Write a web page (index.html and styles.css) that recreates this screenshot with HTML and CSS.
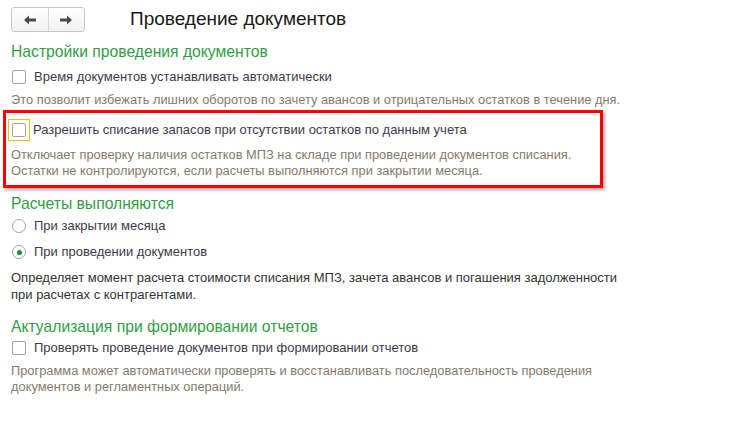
FILE: index.html
```html
<!DOCTYPE html>
<html lang="ru">
<head>
<meta charset="utf-8">
<title>Проведение документов</title>
<link rel="stylesheet" href="styles.css">
</head>
<body>
<div class="header">
  <div class="nav">
    <button class="nav-btn" aria-label="Назад">
      <svg width="14" height="10" viewBox="0 0 14 10"><path d="M1 5 L6 0.5 L6 3.5 L13 3.5 L13 6.5 L6 6.5 L6 9.5 Z" fill="#4a4a4a"/></svg>
    </button>
    <button class="nav-btn" aria-label="Вперед">
      <svg width="14" height="10" viewBox="0 0 14 10"><path d="M13 5 L8 0.5 L8 3.5 L1 3.5 L1 6.5 L8 6.5 L8 9.5 Z" fill="#4a4a4a"/></svg>
    </button>
  </div>
  <h1 class="title">Проведение документов</h1>
</div>

<div class="content">
  <div class="group-title g1">Настройки проведения документов</div>
  <label class="row r1"><span class="cb"></span>Время документов устанавливать автоматически</label>
  <div class="note n1">Это позволит избежать лишних оборотов по зачету авансов и отрицательных остатков в течение дня.</div>

  <div class="highlight">
    <label class="row r2"><span class="cb-focus"><span class="cb"></span></span>Разрешить списание запасов при отсутствии остатков по данным учета</label>
    <div class="note n2">Отключает проверку наличия остатков МПЗ на складе при проведении документов списания.<br>Остатки не контролируются, если расчеты выполняются при закрытии месяца.</div>
  </div>

  <div class="group-title g2">Расчеты выполняются</div>
  <label class="row r3"><span class="radio"></span>При закрытии месяца</label>
  <label class="row r4"><span class="radio checked"></span>При проведении документов</label>
  <div class="info">Определяет момент расчета стоимости списания МПЗ, зачета авансов и погашения задолженности<br>при расчетах с контрагентами.</div>

  <div class="group-title g3">Актуализация при формировании отчетов</div>
  <label class="row r5"><span class="cb"></span>Проверять проведение документов при формировании отчетов</label>
  <div class="note n3">Программа может автоматически проверять и восстанавливать последовательность проведения<br>документов и регламентных операций.</div>
</div>
</body>
</html>
```

FILE: styles.css
```css
* { box-sizing: border-box; }
html, body { margin: 0; padding: 0; background: #fff; }
body {
  width: 739px;
  height: 442px;
  overflow: hidden;
  font-family: "Liberation Sans", Arial, sans-serif;
  font-size: 13px;
  color: #3d3a4a;
}

.header {
  display: flex;
  align-items: flex-start;
  padding: 7px 0 0 11px;
  height: 42px;
}
.nav {
  display: flex;
  width: 74px;
  height: 25px;
  border: 1px solid #c8c8c8;
  border-radius: 3px;
  background: linear-gradient(#ffffff, #f0f0f0);
}
.nav-btn {
  flex: 1;
  display: flex;
  align-items: center;
  justify-content: center;
  border: 0;
  background: transparent;
  padding: 0;
}
.nav-btn + .nav-btn { border-left: 1px solid #d6d6d6; }
.title {
  margin: 0 0 0 45px;
  font-size: 19px;
  font-weight: normal;
  line-height: 24px;
  color: #1a1a1a;
}

.content { padding-left: 11px; }

.group-title {
  font-size: 15.7px;
  line-height: 20px;
  color: #2f9e44;
}
.row {
  display: flex;
  align-items: center;
  height: 20px;
  line-height: 20px;
}
.cb {
  width: 14px;
  height: 14px;
  border: 1px solid #a3a3a3;
  border-radius: 2px;
  background: #fff;
  margin: 0 8px 0 1px;
  flex: none;
}
.cb-focus {
  display: flex;
  align-items: center;
  justify-content: center;
  width: 22px;
  height: 22px;
  border: 1px solid #f2c200;
  margin: 0 3px 0 -3px;
  flex: none;
}
.cb-focus .cb { margin: 0; }
.radio {
  width: 14px;
  height: 14px;
  border: 1px solid #a3a3a3;
  border-radius: 50%;
  background: #fff;
  margin: 0 8px 0 1px;
  flex: none;
  display: flex;
  align-items: center;
  justify-content: center;
}
.radio.checked::after {
  content: "";
  width: 5px;
  height: 5px;
  border-radius: 50%;
  background: #1f8a3a;
}
.note {
  font-size: 12.85px;
  line-height: 16px;
  color: #867a6c;
}
.info {
  line-height: 17px;
  color: #333;
}

.g1 { margin-top: 0; }
.r1 { margin-top: 5px; }
.n1 { margin-top: 5px; }

.highlight {
  margin: 2px 0 0 -8px;
  width: 600px;
  border: 3px solid #ff0000;
  padding: 7px 0 6px 5px;
  box-shadow: 2px 2px 3px rgba(0,0,0,0.35);
}
.r2 { margin-top: 0; }
.n2 { margin-top: 7px; }

.g2 { margin-top: 6px; }
.r3 { margin-top: 2px; }
.r4 { margin-top: 6px; }
.info { margin-top: 7px; }
.g3 { margin-top: 14px; }
.r5 { margin-top: 1px; }
.n3 { margin-top: 5px; }
```
